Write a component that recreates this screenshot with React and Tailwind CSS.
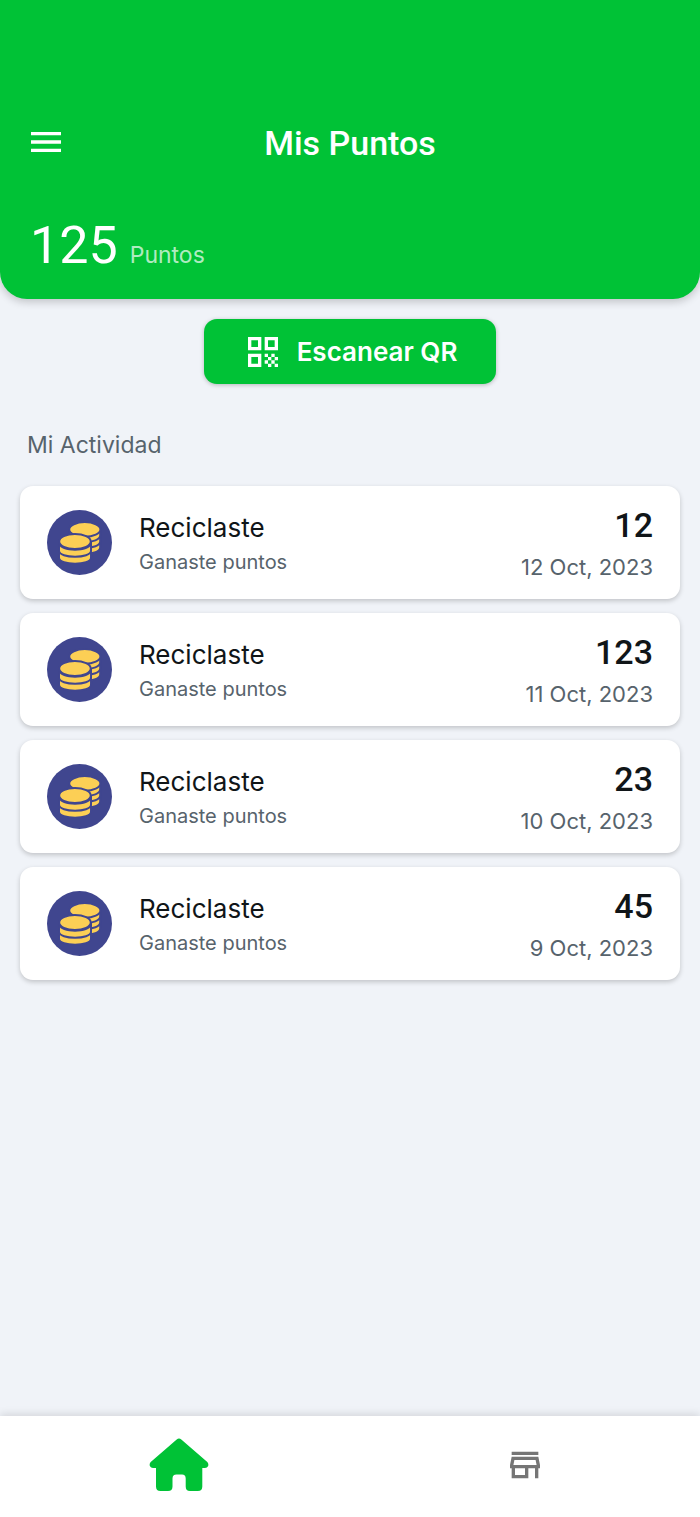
import React from 'react';
import { MdMenu, MdQrCode, MdOutlineStore } from 'react-icons/md';

const activities = [
  { id: 1, title: 'Reciclaste', detail: 'Ganaste puntos', points: 12, date: '12 Oct, 2023' },
  { id: 2, title: 'Reciclaste', detail: 'Ganaste puntos', points: 123, date: '11 Oct, 2023' },
  { id: 3, title: 'Reciclaste', detail: 'Ganaste puntos', points: 23, date: '10 Oct, 2023' },
  { id: 4, title: 'Reciclaste', detail: 'Ganaste puntos', points: 45, date: '9 Oct, 2023' }
];

const CoinsIcon = () => (
  <svg className="h-[65px] w-[65px] shrink-0" viewBox="0 0 66 66" aria-hidden="true">
    <circle cx="33" cy="33" r="33" fill="#40468f" />
    <g fill="#fccf55" stroke="#40468f" strokeWidth="2">
      {/* Back stack */}
      <path d="M23 32v6c0 8.500 31 8.500 31 0v-6z" />
      <path d="M23 26v6c0 8.500 31 8.500 31 0v-6z" />
      <path d="M23 20v6c0 8.500 31 8.500 31 0v-6z" />
      <ellipse cx="38.400" cy="19.700" rx="15.800" ry="7.400" />
      {/* Front stack */}
      <path d="M12.200 43v5.500c0 8 32.500 8 32.500 0V43z" />
      <path d="M12.200 33v8.500c0 8 32.500 8 32.500 0V33z" />
      <path d="M12.200 32v2.500c0 9 32.500 9 32.500 0V32z" stroke="none" fill="#40468f" />
      <ellipse cx="28.400" cy="32" rx="16" ry="7.600" />
    </g>
  </svg>
);

const HomeIcon = () => (
  <svg className="h-[54px] w-[60px]" viewBox="0 0 60 54" aria-hidden="true">
    <path
      fill="#00c236"
      d="M27.700 1.500Q30 -.3 32.300 1.500L58.300 24Q60 26 59 28.300Q58.200 30 56 30H53.300V48.500Q53.300 53 48.800 53H41Q36.700 53 36.700 48.500V40.500Q36.700 36.500 33 36.500H27.500Q23.500 36.500 23.500 40.500V48.500Q23.500 53 19 53H11.500Q7 53 7 48.500V30H4Q1.800 30 1 28.300Q0 26 1.700 24Z"
    />
  </svg>
);

const ActivityCard = ({ activity }) => (
  <li className="flex h-[113px] items-center rounded-[13px] bg-white px-[27px] shadow-[0_2px_5px_rgba(0,0,0,0.2)]">
    <CoinsIcon />
    <div className="ml-[27px] flex-1 pt-0.5">
      <h3 className="text-[26px] leading-9 text-[#101518]">{activity.title}</h3>
      <p className="text-[20px] leading-8 text-[#57636c]">{activity.detail}</p>
    </div>
    <div className="pt-1 text-right">
      <p className="font-['Roboto',sans-serif] text-[34px] leading-[44px] font-medium text-[#101518]">{activity.points}</p>
      <p className="text-[22px] leading-10 text-[#57636c]">{activity.date}</p>
    </div>
  </li>
);

const App = () => {
  return (
    <div className="flex min-h-screen flex-col bg-[#f0f3f8] font-['Inter',sans-serif]">
      {/* Header */}
      <header className="rounded-b-[27px] bg-[#00c236] px-[26px] pt-[116px] pb-4 text-white shadow-[0_3px_8px_rgba(0,0,0,0.2)]">
        <div className="grid h-[52px] grid-cols-[40px_1fr_40px] items-center">
          <button type="button" aria-label="Menú">
            <MdMenu className="h-10 w-10" />
          </button>
          <h1 className="pt-0.5 text-center font-['Roboto',sans-serif] text-[34px] leading-10 font-medium">Mis Puntos</h1>
        </div>
        <div className="mt-10 flex items-baseline gap-3 pl-1">
          <span className="font-['Roboto',sans-serif] text-[52px] leading-[75px]">125</span>
          <span className="text-[23px] text-white/70">Puntos</span>
        </div>
      </header>

      <main className="flex-1 px-5 pt-5 pb-8">
        <button
          type="button"
          className="mx-auto flex h-[65px] w-[292px] items-center justify-center gap-3.5 rounded-[13px] bg-[#00c236] text-[26px] font-semibold text-white shadow-[0_1px_4px_rgba(0,0,0,0.25)]"
        >
          <MdQrCode className="h-10 w-10" />
          Escanear QR
        </button>

        {/* Activity */}
        <h2 className="mt-10 pl-[7px] text-[23px] leading-[42px] text-[#57636c]">Mi Actividad</h2>
        <ul className="mt-5 flex flex-col gap-3.5">
          {activities.map((activity) => (
            <ActivityCard key={activity.id} activity={activity} />
          ))}
        </ul>
      </main>

      {/* Bottom navigation */}
      <nav className="grid h-[101px] grid-cols-2 bg-white pb-1 shadow-[0_-2px_8px_rgba(0,0,0,0.12)]">
        <a href="#inicio" aria-label="Inicio" className="flex items-center justify-center pl-2">
          <HomeIcon />
        </a>
        <a href="#tienda" aria-label="Tienda" className="flex items-center justify-center text-[#757575]">
          <MdOutlineStore className="h-10 w-10" />
        </a>
      </nav>
    </div>
  );
};

export default App;
